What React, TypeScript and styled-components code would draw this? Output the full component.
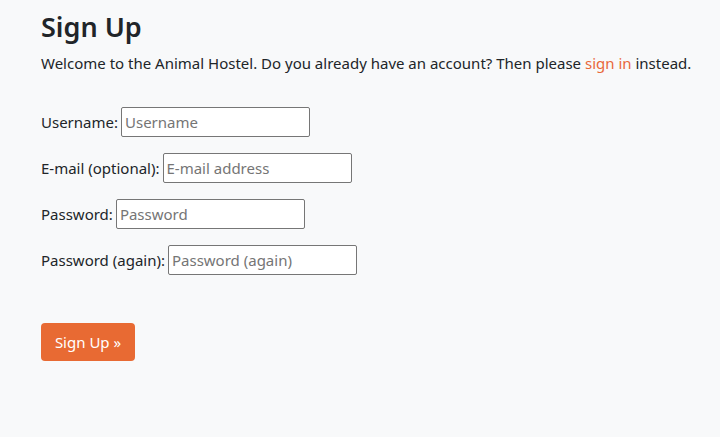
import styled, { createGlobalStyle } from "styled-components";

const GlobalStyle = createGlobalStyle`
    html, body {
        margin: 0;
        padding: 0;
        background: #f8f9fa;
    }
    body {
        font-family: "Noto Sans", "Open Sans", sans-serif;
        color: #212529;
        font-size: 15px;
    }
`;

const Page = styled.main`
    padding: 8px 8px 0 41px;
    min-height: 437px;
    box-sizing: border-box;
`;
const Heading = styled.h1`
    font-size: 27px;
    font-weight: 600;
    line-height: 38px;
    margin: 0 0 5px;
`;
const Intro = styled.p`
    margin: 0 0 32px;
    line-height: 24px;
    white-space: nowrap;
`;
const SignInLink = styled.a`
    color: #e8683a;
    text-decoration: none;
`;
const Form = styled.form`
    display: flex;
    flex-direction: column;
    gap: 16px;
`;
const Row = styled.div`
    display: flex;
    align-items: center;
    gap: 3px;
    height: 30px;
`;
const Label = styled.label`
    line-height: 24px;
`;
const Input = styled.input`
    box-sizing: border-box;
    width: 189px;
    height: 30px;
    padding: 1px 3px;
    border: 1px solid #767676;
    border-radius: 2px;
    background: #fff;
    font-family: inherit;
    font-size: 15px;
    color: #212529;
    &::placeholder {
        color: #757575;
    }
`;
const SubmitButton = styled.button`
    margin-top: 32px;
    align-self: flex-start;
    width: 94px;
    height: 38px;
    border: none;
    border-radius: 4px;
    background: #e86a33;
    color: #fff;
    font-family: inherit;
    font-size: 15px;
`;

const fields = [
    { id: "username", label: "Username:", placeholder: "Username", type: "text" },
    { id: "email", label: "E-mail (optional):", placeholder: "E-mail address", type: "email" },
    { id: "password1", label: "Password:", placeholder: "Password", type: "password" },
    { id: "password2", label: "Password (again):", placeholder: "Password (again)", type: "password" },
];

export default function App() {
    return (
        <>
            <GlobalStyle />
            <Page>
                <Heading>Sign Up</Heading>
                <Intro>
                    Welcome to the Animal Hostel. Do you already have an account? Then please{" "}
                    <SignInLink href="#">sign in</SignInLink> instead.
                </Intro>
                <Form onSubmit={(e) => e.preventDefault()}>
                    {fields.map((f) => (
                        <Row key={f.id}>
                            <Label htmlFor={f.id}>{f.label}</Label>
                            <Input id={f.id} type={f.type} placeholder={f.placeholder} />
                        </Row>
                    ))}
                    <SubmitButton type="submit">Sign Up »</SubmitButton>
                </Form>
            </Page>
        </>
    );
}
